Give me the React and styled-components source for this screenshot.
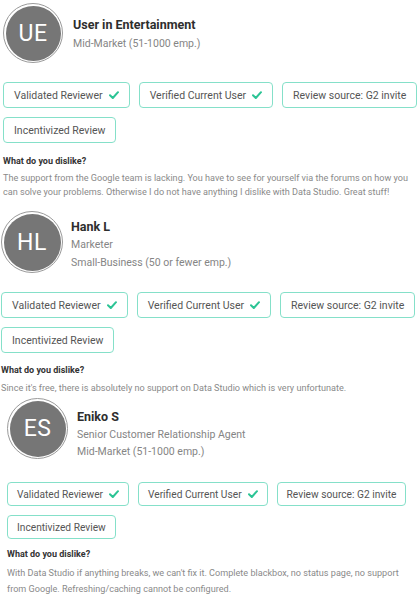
import React from 'react';
import styled, { createGlobalStyle } from 'styled-components';

const GlobalStyle = createGlobalStyle`
  html, body {
    margin: 0;
    padding: 0;
    background: #fff;
  }
  body {
    font-family: Roboto, "Liberation Sans", sans-serif;
    color: #333;
  }
`;

export const Page = styled.div`
  width: 420px;
  height: 604px;
  overflow: hidden;
  display: flex;
  flex-direction: column;
`;

export const Review = styled.section`
  display: flex;
  flex-direction: column;
  padding-left: ${(p) => p.$inset}px;
  margin-top: ${(p) => p.$top}px;
`;

export const Header = styled.div`
  display: flex;
  align-items: flex-start;
  gap: ${(p) => p.$gap}px;
`;

export const Avatar = styled.div`
  width: ${(p) => p.$size}px;
  height: ${(p) => p.$size}px;
  box-sizing: border-box;
  border-radius: 50%;
  border: 1.5px solid #9a9a9a;
  padding: 1.5px;
  background: #767676;
  background-clip: content-box;
  display: flex;
  align-items: center;
  justify-content: center;
  color: #fff;
  font-size: 23px;
  letter-spacing: 0.5px;
  flex-shrink: 0;
`;

export const Info = styled.div`
  display: flex;
  flex-direction: column;
  padding-top: ${(p) => p.$pad}px;
`;

export const Name = styled.div`
  font-size: 12.5px;
  font-weight: 700;
  color: #2e2e2e;
  line-height: 18px;
`;

export const Meta = styled.div`
  font-size: 10.5px;
  color: #858585;
  line-height: ${(p) => p.$lh}px;
`;

export const Badges = styled.div`
  display: flex;
  flex-wrap: wrap;
  column-gap: 9px;
  row-gap: 9px;
  margin-top: ${(p) => p.$top}px;
`;

export const Badge = styled.div`
  height: ${(p) => p.$h}px;
  box-sizing: border-box;
  display: flex;
  align-items: center;
  gap: 6px;
  padding: 0 ${(p) => p.$pad}px;
  border: 1.5px solid #85e0c9;
  border-radius: 4px;
  font-size: ${(p) => p.$fs}px;
  color: #555;
  white-space: nowrap;
`;

export const Heading = styled.div`
  margin-top: ${(p) => p.$top}px;
  font-size: 9px;
  font-weight: 700;
  color: #333;
  line-height: 12px;
`;

export const Body = styled.p`
  margin: ${(p) => p.$top}px 0 0;
  font-size: 9.1px;
  color: #8a8a8a;
  line-height: ${(p) => p.$lh}px;
`;

const Check = () => (
  <svg width="10" height="8" viewBox="0 0 10 8">
    <path d="M1 4.2 L3.8 7 L9 1.2" fill="none" stroke="#2cc495" strokeWidth="2" strokeLinecap="round" strokeLinejoin="round" />
  </svg>
);

const BadgeSet = ({ h, top, fs, pad }) => (
  <Badges $top={top}>
    <Badge $h={h} $fs={fs} $pad={pad}>Validated Reviewer <Check /></Badge>
    <Badge $h={h} $fs={fs} $pad={pad}>Verified Current User <Check /></Badge>
    <Badge $h={h} $fs={fs} $pad={pad}>Review source: G2 invite</Badge>
    <Badge $h={h} $fs={fs} $pad={pad}>Incentivized Review</Badge>
  </Badges>
);

const reviews = [
  {
    initials: 'UE',
    name: 'User in Entertainment',
    meta: ['Mid-Market (51-1000 emp.)'],
    text: 'The support from the Google team is lacking. You have to see for yourself via the forums on how you can solve your problems. Otherwise I do not have anything I dislike with Data Studio. Great stuff!',
    inset: 3, top: 3, size: 60, gap: 10, pad: 13, lh: 19, badgeTop: 19, h: 26, fs: 10.5, bpad: 10, headTop: 12, bodyTop: 4, bodyLh: 14,
  },
  {
    initials: 'HL',
    name: 'Hank L',
    meta: ['Marketer', 'Small-Business (50 or fewer emp.)'],
    text: "Since it's free, there is absolutely no support on Data Studio which is very unfortunate.",
    inset: 1, top: 12, size: 62, gap: 8, pad: 7, lh: 18, badgeTop: 19, h: 26, fs: 10.5, bpad: 10, headTop: 11, bodyTop: 5, bodyLh: 14,
  },
  {
    initials: 'ES',
    name: 'Eniko S',
    meta: ['Senior Customer Relationship Agent', 'Mid-Market (51-1000 emp.)'],
    text: "With Data Studio if anything breaks, we can't fix it. Complete blackbox, no status page, no support from Google. Refreshing/caching cannot be configured.",
    inset: 7, top: 3, size: 61, gap: 9, pad: 10, lh: 17, badgeTop: 22, h: 24, fs: 10.2, bpad: 9, headTop: 9, bodyTop: 5, bodyLh: 16,
  },
];

export default function App() {
  return (
    <>
      <GlobalStyle />
      <Page>
        {reviews.map((r) => (
          <Review key={r.initials} $inset={r.inset} $top={r.top}>
            <Header $gap={r.gap}>
              <Avatar $size={r.size}>{r.initials}</Avatar>
              <Info $pad={r.pad}>
                <Name>{r.name}</Name>
                {r.meta.map((m) => (
                  <Meta key={m} $lh={r.lh}>{m}</Meta>
                ))}
              </Info>
            </Header>
            <BadgeSet h={r.h} top={r.badgeTop} fs={r.fs} pad={r.bpad} />
            <Heading $top={r.headTop}>What do you dislike?</Heading>
            <Body $top={r.bodyTop} $lh={r.bodyLh}>{r.text}</Body>
          </Review>
        ))}
      </Page>
    </>
  );
}
